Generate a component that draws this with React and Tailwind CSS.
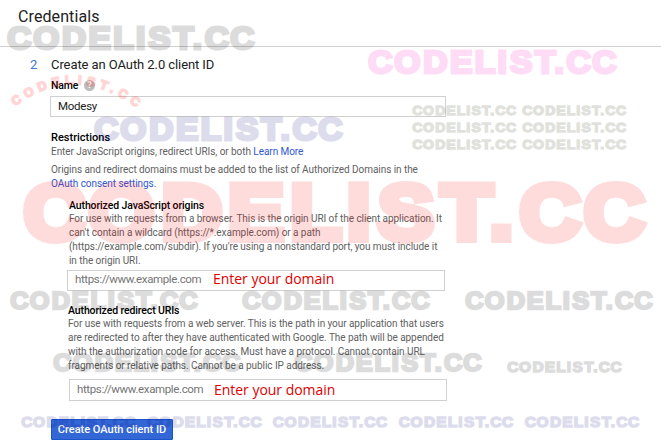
import React from "react";

// Horizontal centre of each letter, in thousandths of the wordmark's width.
const CENTERS = [50, 158, 271, 374, 470, 539, 615, 712, 768, 846, 949];
const STRETCH = 1.07;

// x, y: left edge and baseline; w: full width.
const marks = [
  { x: 7, y: 50.3, w: 248, fill: "#000000" },
  { x: 368, y: 74.5, w: 249, fill: "#ff00bb" },
  { x: 94, y: 141.7, w: 249, fill: "#00007a" },
  { x: 23, y: 243.3, w: 623, fill: "#ff0000" },
  { x: 412, y: 115.8, w: 104.5, fill: "#202800" },
  { x: 522, y: 115.8, w: 104.5, fill: "#202800" },
  { x: 412, y: 133, w: 104.5, fill: "#202800" },
  { x: 522, y: 133, w: 104.5, fill: "#202800" },
  { x: 412, y: 150, w: 104.5, fill: "#202800" },
  { x: 522, y: 150, w: 104.5, fill: "#202800" },
  { x: 10, y: 310.6, w: 188, fill: "#000000" },
  { x: 242, y: 310.6, w: 188, fill: "#000000" },
  { x: 465, y: 310.6, w: 188, fill: "#000000" },
  { x: 53, y: 372.2, w: 188, fill: "#000000" },
  { x: 294, y: 372.2, w: 188, fill: "#000000" },
  { x: 507, y: 372.3, w: 115, fill: "#000000" },
  { x: 21, y: 428, w: 115, fill: "#00007a" },
  { x: 147, y: 428, w: 115, fill: "#00007a" },
  { x: 272.5, y: 428, w: 115, fill: "#00007a" },
  { x: 398.5, y: 428, w: 115, fill: "#00007a" },
  { x: 524.5, y: 428, w: 115, fill: "#00007a" },
];

function Watermarks() {
  return (
    <svg
      className="pointer-events-none absolute inset-0 font-['Liberation_Sans',Arial,sans-serif] font-bold"
      width="661"
      height="446"
      viewBox="0 0 661 446"
    >
      {marks.map((m, i) => {
        const size = m.w * 0.126;
        return (
          <text
            key={i}
            transform={`translate(${m.x} ${m.y - size * 0.05}) scale(${STRETCH} 1)`}
            x={CENTERS.map((c) => ((c / 1000) * m.w) / STRETCH).join(" ")}
            y="0"
            textAnchor="middle"
            fontSize={size}
            fill={m.fill}
            stroke={m.fill}
            strokeWidth={size * 0.1}
            opacity="0.133"
          >
            CODELIST.CC
          </text>
        );
      })}
      <path id="arc" d="M15 106.5 Q74 61 137 108" fill="none" />
      <text
        fontSize="12.5"
        fill="#ff0000"
        stroke="#ff0000"
        strokeWidth="1.7"
        opacity="0.16"
      >
        <textPath href="#arc" textLength="132" lengthAdjust="spacing">CODELIST.CC</textPath>
      </text>
    </svg>
  );
}

function Line({ children, className = "" }) {
  return <div className={`whitespace-nowrap ${className}`}>{children}</div>;
}

function UriField({ className, hintWidth = "w-[138px]", hintPad = "pb-[3px]" }) {
  return (
    <div className={`flex items-center border border-[#d0d0d0] ${className}`}>
      <span className={`${hintWidth} pb-[3px] text-[11.5px] leading-[16px] tracking-[-0.37px] text-[#757575]`}>
        https://www.example.com
      </span>
      <span className={`${hintPad} font-['Open_Sans','Noto_Sans',sans-serif] text-[14px] leading-[18px] tracking-[-0.03px] text-[#e00000]`}>
        Enter your domain
      </span>
    </div>
  );
}

export default function App() {
  return (
    <div className="relative h-[446px] w-[661px] overflow-hidden bg-white font-['Roboto',sans-serif] text-[#212121]">
      <header className="h-[47px] border-b border-[#d0d0d0] pt-[7px] pl-[18px] text-[16px] leading-[20px] tracking-[0.1px]">
        Credentials
      </header>
      <main className="flex">
        <div className="w-[50px] shrink-0 pt-[8px] pl-[30px] text-[13px] leading-[20px] text-[#4272db]">2</div>
        <div className="w-[396px]">
          <h1 className="pt-[8px] pl-px text-[13px] leading-[20px] tracking-[-0.08px] whitespace-nowrap">
            Create an OAuth 2.0 client ID
          </h1>
          <div className="flex h-[21px] items-center pl-px text-[10.5px] font-medium text-black">
            <span className="w-[33px] tracking-[-0.2px]">Name</span>
            <span className="flex h-[11px] w-[11px] items-center justify-center rounded-full bg-[#bdbdbd] text-[9px] leading-none font-bold text-white">
              ?
            </span>
          </div>
          <div className="flex h-[21px] items-center border border-[#d0d0d0] pl-[7px] text-[11.5px] leading-[17px] tracking-[-0.25px]">
            Modesy
          </div>

          <h2 className="mt-[14px] pl-px text-[11px] leading-[14px] font-medium text-black">Restrictions</h2>
          <div className="pl-px text-[10px] leading-[14px] tracking-[-0.058px] text-[#616161]">
            <Line>
              Enter JavaScript origins, redirect URIs, or both <a className="text-[#3057d5]">Learn More</a>
            </Line>
            <Line className="mt-[4px]">Origins and redirect domains must be added to the list of Authorized Domains in the</Line>
            <Line>
              <a className="text-[#3057d5]">OAuth consent settings</a>.
            </Line>
          </div>

          <section className="mt-[8px] pl-[19px] text-[10px] leading-[14px] tracking-[-0.062px] text-[#616161]">
            <h3 className="text-[10.5px] leading-[13px] font-medium tracking-[-0.12px] text-black">Authorized JavaScript origins</h3>
            <Line>For use with requests from a browser. This is the origin URI of the client application. It</Line>
            <Line>can't contain a wildcard (https://*.example.com) or a path</Line>
            <Line>(https://example.com/subdir). If you're using a nonstandard port, you must include it</Line>
            <Line>in the origin URI.</Line>
          </section>
          <UriField className="mt-[2px] ml-[17px] h-[21px] w-[378px] pl-[7px]" />

          <section className="mt-[13px] pl-[18px] text-[10px] leading-[14px] tracking-[-0.058px] text-[#616161]">
            <h3 className="text-[10.5px] leading-[13px] font-medium tracking-[-0.12px] text-black">Authorized redirect URIs</h3>
            <Line>For use with requests from a web server. This is the path in your application that users</Line>
            <Line>are redirected to after they have authenticated with Google. The path will be appended</Line>
            <Line>with the authorization code for access. Must have a protocol. Cannot contain URL</Line>
            <Line>fragments or relative paths. Cannot be a public IP address.</Line>
          </section>
          <UriField className="mt-[6px] ml-[19px] h-[22px] w-[378px] pl-[7px]" hintWidth="w-[137px]" hintPad="pb-px" />

          <button className="mt-[18px] ml-px flex h-[21px] w-[122px] items-center justify-center rounded-[1px] border border-[#1b55cc] bg-[#3367d6] text-[11px] leading-[17px] font-medium whitespace-nowrap text-white">
            Create OAuth client ID
          </button>
        </div>
      </main>
      <Watermarks />
    </div>
  );
}
